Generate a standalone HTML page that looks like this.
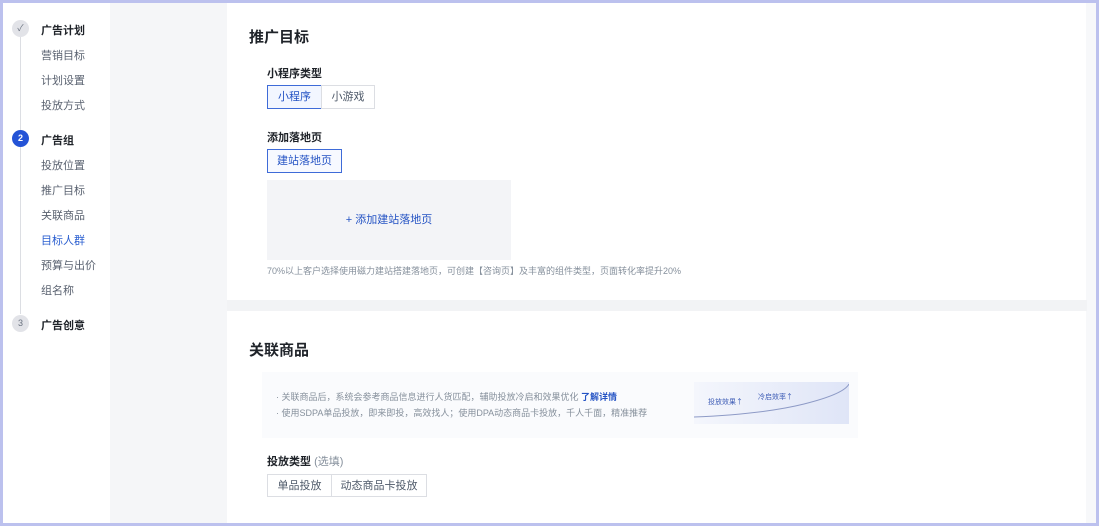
<!DOCTYPE html>
<html><head><meta charset="utf-8">
<style>
*{margin:0;padding:0;box-sizing:border-box}
body{width:1099px;height:526px;overflow:hidden;background:#fff;font-family:"Liberation Sans","Noto Sans CJK SC",sans-serif;color:#1f2329;position:relative}
.frame{position:absolute;inset:0;border:3px solid #bcc1ee;pointer-events:none;z-index:10}
.abs{position:absolute}
.band{left:110px;top:0;width:117px;height:526px;background:#f5f6f8}
.rband{left:1086px;top:0;width:13px;height:526px;background:#f7f8fa}
.sep{left:227px;top:300px;width:860px;height:11px;background:#f2f3f5}
.step{font-size:11px;font-weight:bold;color:#1f2329}
.sub{font-size:11px;color:#5a6270}
.dot{width:17px;height:17px;border-radius:50%;background:#e2e3e8;color:#6b7380;font-size:9px;text-align:center;line-height:17px}
.line{left:20px;width:1px;background:#dcdee3}
.btn{height:24px;border:1px solid #dcdee3;font-size:11px;line-height:22px;text-align:center;background:#fff;color:#4e5969}
.sel{border-color:#3e6bd8;color:#2453c4;background:#f2f6ff}
</style></head><body>
<div class="abs band"></div>
<div class="abs rband"></div>
<div class="abs sep"></div>

<div class="abs line" style="top:36px;height:96px"></div>
<div class="abs line" style="top:146px;height:168px"></div>
<div class="abs dot" style="left:12px;top:20px">✓</div>
<div class="abs step" style="left:41px;top:22px">广告计划</div>
<div class="abs sub" style="left:41px;top:47px">营销目标</div>
<div class="abs sub" style="left:41px;top:72px">计划设置</div>
<div class="abs sub" style="left:41px;top:97px">投放方式</div>
<div class="abs dot" style="left:12px;top:130px;background:#2453d6;color:#fff;font-weight:bold">2</div>
<div class="abs step" style="left:41px;top:132px">广告组</div>
<div class="abs sub" style="left:41px;top:157px">投放位置</div>
<div class="abs sub" style="left:41px;top:182px">推广目标</div>
<div class="abs sub" style="left:41px;top:207px">关联商品</div>
<div class="abs sub" style="left:41px;top:232px;color:#2b5fd0">目标人群</div>
<div class="abs sub" style="left:41px;top:257px">预算与出价</div>
<div class="abs sub" style="left:41px;top:282px">组名称</div>
<div class="abs dot" style="left:12px;top:315px">3</div>
<div class="abs step" style="left:41px;top:317px">广告创意</div>

<div class="abs" style="left:249px;top:26px;font-size:15px;font-weight:bold">推广目标</div>
<div class="abs" style="left:267px;top:65px;font-size:11px;font-weight:bold;color:#1f2329">小程序类型</div>
<div class="abs btn sel" style="left:267px;top:85px;width:55px">小程序</div>
<div class="abs btn" style="left:321px;top:85px;width:54px">小游戏</div>
<div class="abs" style="left:267px;top:129px;font-size:11px;font-weight:bold">添加落地页</div>
<div class="abs btn sel" style="left:267px;top:149px;width:75px;background:#f7f9ff">建站落地页</div>
<div class="abs" style="left:267px;top:180px;width:244px;height:80px;background:#f3f4f7;color:#2453c4;font-size:11px;text-align:center;line-height:80px">+ 添加建站落地页</div>
<div class="abs" style="left:267px;top:264px;font-size:9px;color:#86909c">70%以上客户选择使用磁力建站搭建落地页，可创建【咨询页】及丰富的组件类型，页面转化率提升20%</div>

<div class="abs" style="left:249px;top:339px;font-size:15px;font-weight:bold">关联商品</div>
<div class="abs" style="left:262px;top:372px;width:596px;height:66px;background:#fafbfd"></div>
<div class="abs" style="left:276px;top:390px;font-size:9px;color:#86909c">· 关联商品后，系统会参考商品信息进行人货匹配，辅助投放冷启和效果优化 <span style="color:#2453c4;font-weight:bold">了解详情</span></div>
<div class="abs" style="left:276px;top:406px;font-size:9px;color:#86909c">· 使用SDPA单品投放，即来即投，高效找人；使用DPA动态商品卡投放，千人千面，精准推荐</div>
<svg class="abs" style="left:694px;top:382px" width="155" height="42" viewBox="0 0 155 42">
<defs><linearGradient id="g" x1="0" x2="1"><stop offset="0" stop-color="#f4f6fc"/><stop offset="1" stop-color="#dfe5f7"/></linearGradient></defs>
<rect width="155" height="42" fill="url(#g)"/>
<path d="M0 35 Q70 32 110 22 T155 2" stroke="#8d9ac6" fill="none" stroke-width="1"/>
<text x="14" y="22" font-size="7" fill="#3c5bb5" font-family="Noto Sans CJK SC">投放效果↑</text>
<text x="64" y="17" font-size="7" fill="#3c5bb5" font-family="Noto Sans CJK SC">冷启效率↑</text>
</svg>
<div class="abs" style="left:267px;top:453px;font-size:11px;font-weight:bold">投放类型 <span style="font-weight:normal;color:#86909c">(选填)</span></div>
<div class="abs btn" style="left:267px;top:474px;width:65px;height:23px">单品投放</div>
<div class="abs btn" style="left:331px;top:474px;width:96px;height:23px">动态商品卡投放</div>

<div class="frame"></div>
</body></html>
